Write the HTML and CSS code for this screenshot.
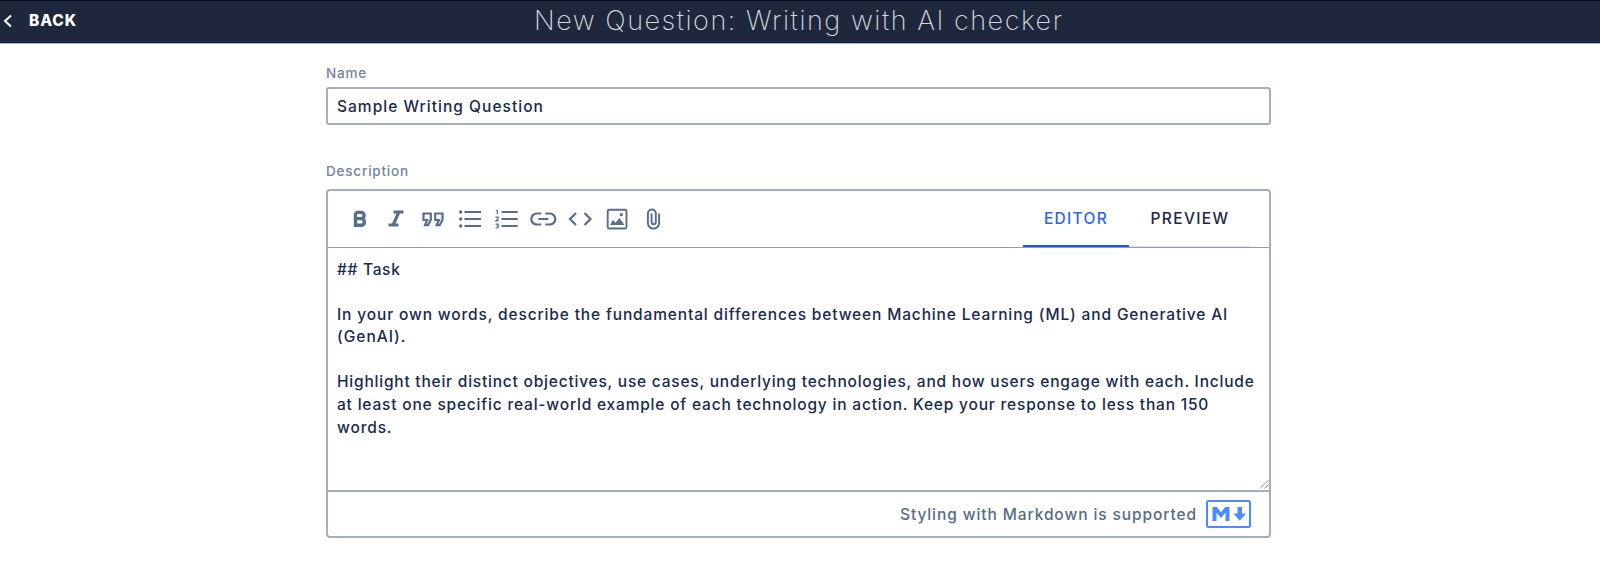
FILE: index.html
```html
<!DOCTYPE html>
<html lang="en">
<head>
<meta charset="utf-8">
<title>New Question</title>
<link rel="stylesheet" href="styles.css">
</head>
<body>
<header class="topbar">
  <a class="back"><svg class="chevron" width="10" height="14" viewBox="0 0 10 14"><path d="M8 1.500 2 7l6 5.500"/></svg><span class="back-text">BACK</span></a>
  <h1 class="title">New Question: Writing with AI checker</h1>
</header>
<main class="form">
  <label class="label name-label">Name</label>
  <div class="input"><span class="sample">Sample Writing Question</span></div>
  <label class="label desc-label">Description</label>
  <section class="editor">
    <div class="toolbar">
      <div class="tools">
        <svg class="tool" viewBox="-18 -18 36 36"><path class="thick" d="M-4.500 -6.600V6.300H1.500A3.400 3.400 0 0 0 1.500 -.4H-4.500M1 -.4A3.100 3.100 0 0 0 1 -6.600H-4.500"/></svg>
        <svg class="tool" viewBox="-18 -18 36 36"><path class="fill" d="M-2.500 -8.500H7.500V-5.500H4L-.5 4.500H2.500V7.500H-7.500V4.500H-4L.5 -5.500H-2.500Z"/></svg>
        <svg class="tool" viewBox="-18 -18 36 36"><path class="line" d="M-9.500 -5.500H-2.200V1L-5 6.200H-8L-5.800 1H-9.500ZM2.200 -5.500H9.500V1L6.700 6.200H3.700L5.900 1H2.200Z"/></svg>
        <svg class="tool" viewBox="-18 -18 36 36"><path class="line" d="M-5.500 -7H11M-5.500 0H11M-5.500 7H11"/><circle class="fill" cx="-9.300" cy="-7" r="1.700"/><circle class="fill" cx="-9.300" cy="0" r="1.700"/><circle class="fill" cx="-9.300" cy="7" r="1.700"/></svg>
        <svg class="tool" viewBox="-18 -18 36 36"><path class="line" d="M-5.500 -7H10.700M-5.500 0H10.700M-5.500 7H10.700"/><path class="thin" d="M-11.200 -8.500H-9.700V-4.800M-11.500 -1.800H-8.800V-.2L-11.200 1.800H-8.500M-11.500 5.200H-8.800V9H-11.500M-10.700 7H-8.800"/></svg>
        <svg class="tool" viewBox="-18 -18 36 36"><path class="line" d="M-1.700 -5.500H-6.200A5.500 5.500 0 0 0 -6.200 5.500H-1.700M2.300 -5.500H6.800A5.500 5.500 0 0 1 6.800 5.500H2.300M-4.700 0H5.300"/></svg>
        <svg class="tool" viewBox="-18 -18 36 36"><path class="line" d="M-4 -6 -10 0 -4 6M4.500 -6 10.500 0 4.500 6"/></svg>
        <svg class="tool" viewBox="-18 -18 36 36"><rect class="line image-frame" x="-9.300" y="-9.300" width="18.800" height="18.800" rx="1.500"/><path class="fill" d="M-7 6 -4 1 -1.500 3.700 2.500 -1 7.500 6Z"/><circle class="fill" cx="4.300" cy="-4.300" r="1.600"/></svg>
        <svg class="tool" viewBox="-18 -18 36 36"><path class="line clip" d="M5.100 -5.500V4A5.600 5.600 0 0 1 -6.100 4V-5.500A3.900 3.900 0 0 1 1.800 -5.500V3.200A2 2 0 0 1 -2.400 3.200V-5.500"/></svg>
      </div>
      <nav class="tabs">
        <span class="tab active"><span class="editor-text">EDITOR</span></span>
        <span class="tab"><span class="preview-text">PREVIEW</span></span>
      </nav>
    </div>
    <div class="content">
      <span class="row l1">## Task</span>
      <span class="row">&nbsp;</span>
      <span class="row l2">In your own words, describe the fundamental differences between Machine Learning (ML) and Generative AI</span>
      <span class="row l3">(GenAI).</span>
      <span class="row">&nbsp;</span>
      <span class="row l4">Highlight their distinct objectives, use cases, underlying technologies, and how users engage with each. Include</span>
      <span class="row l5">at least one specific real-world example of each technology in action. Keep your response to less than 150</span>
      <span class="row l6">words.</span>
      <svg class="grip" width="10" height="10" viewBox="0 0 10 10"><path d="M1 9.500 9.500 1M5.500 9.500 9.500 5.500"/></svg>
    </div>
    <footer class="footer">
      <span class="support">Styling with Markdown is supported</span>
      <svg class="md" width="45" height="28" viewBox="0 0 45 28"><rect x="1" y="1" width="43" height="26" rx="1.500"/><path class="md-fill" d="M6.500 21V7H10.700L15 12.300 19.300 7H23.500V21H19.500V12.700L15 18 10.500 12.700V21Z"/><path class="md-fill" d="M31.500 7H36V13.500H40L33.700 20.800 27.500 13.500H31.500Z"/></svg>
    </footer>
  </section>
</main>
</body>
</html>
```
FILE: styles.css
```css
* { box-sizing: border-box; }
body { margin: 0; background: #fff; color: #182a4d; font-family: Inter, sans-serif; height: 570px; overflow: hidden; }
.topbar { height: 43px; background: #1e273b; border-top: 1px solid #020a25; border-bottom: 1px solid #0a1d44; display: grid; grid-template-columns: 534px 1fr; align-items: center; box-shadow: 0 1px 0 #aab4c4; }
.back { display: flex; align-items: center; gap: 16px; padding-left: 3px; padding-bottom: 2px; color: #fff; font-size: 15.500px; font-weight: 800; line-height: 20px; }
.chevron { fill: none; stroke: #fff; stroke-width: 2; }
.back-text { letter-spacing: .9px; }
.title { margin: 0; padding-bottom: 2px; color: #d5d8de; font-size: 27px; font-weight: 200; line-height: 38px; letter-spacing: 1.520px; white-space: nowrap; }
.form { display: flex; flex-direction: column; width: 945px; margin-left: 326px; padding-top: 20px; }
.label { color: #71839e; font-size: 13.500px; font-weight: 500; line-height: 20px; letter-spacing: .8px; }
.input { height: 38px; margin-top: 4px; border: 2px solid #a3afc0; border-radius: 3px; padding-left: 9px; display: flex; align-items: center; font-size: 15.500px; font-weight: 500; }
.sample { letter-spacing: 1.030px; }
.desc-label { margin-top: 36px; }
.editor { height: 348px; margin-top: 8px; border: 2px solid #a3afc0; border-radius: 4px; display: flex; flex-direction: column; height: 349px; }
.toolbar { height: 57px; flex: none; border-bottom: 1px solid #8f9db1; display: flex; justify-content: space-between; }
.tools { display: flex; padding: 9.500px 0 0 13.500px; gap: .8px; }
.tool { width: 36px; height: 36px; fill: none; stroke: none; }
.line { stroke: #586d8a; stroke-width: 2.200; }
.image-frame { stroke-width: 1.900; }
.clip { stroke-width: 1.900; }
.thick { stroke: #586d8a; stroke-width: 3.400; }
.thin { stroke: #586d8a; stroke-width: 1.200; }
.fill { fill: #586d8a; }
.tabs { display: flex; padding-right: 18px; font-size: 15.500px; font-weight: 500; color: #1c2745; }
.tab { width: 122px; border-bottom: 1px solid #e3e7e5; display: flex; align-items: center; justify-content: center; }
.active { width: 106px; border-bottom: 2px solid #1557ff; color: #2865ef; padding-top: 1px; }
.editor-text { letter-spacing: 1.300px; }
.preview-text { letter-spacing: 1.350px; }
.content { position: relative; flex: 1; padding: 10.500px 0 0 9px; font-size: 15.500px; font-weight: 500; line-height: 22.600px; }
.row { display: block; width: max-content; white-space: nowrap; }
.l1 { letter-spacing: .680px; }
.l2 { letter-spacing: .858px; }
.l3 { letter-spacing: 1px; }
.l4 { letter-spacing: .784px; }
.l5 { letter-spacing: .810px; }
.l6 { letter-spacing: .850px; }
.grip { position: absolute; right: 0; bottom: 1px; stroke: #8c8c8c; fill: none; }
.footer { height: 46px; border-top: 2px solid #a3afc0; display: flex; align-items: center; justify-content: flex-end; gap: 9px; padding-right: 18px; color: #566b87; font-size: 15.500px; font-weight: 500; }
.support { letter-spacing: .910px; }
.md { fill: none; stroke: #4e8aff; stroke-width: 2; }
.md-fill { fill: #4e8aff; stroke: none; }
```
